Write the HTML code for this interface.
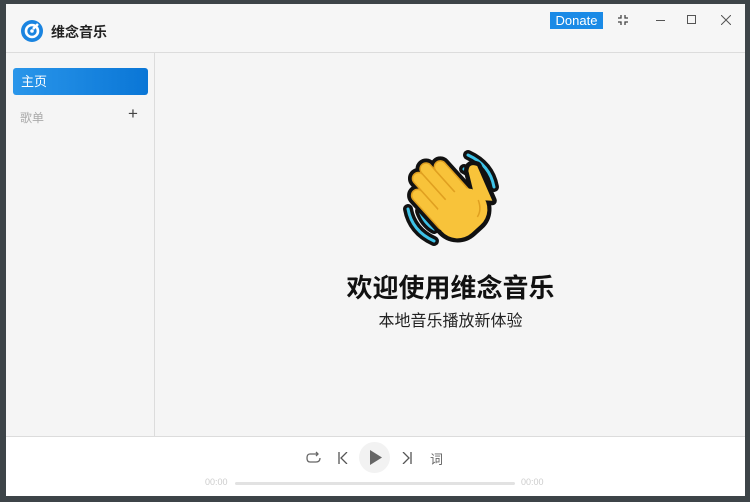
<!DOCTYPE html>
<html><head><meta charset="utf-8"><style>
*{margin:0;padding:0;box-sizing:border-box}
body{width:750px;height:502px;background:#3d4448;font-family:"Liberation Sans","Noto Sans CJK SC",sans-serif;position:relative;overflow:hidden}
.win{position:absolute;left:6px;top:4px;right:5px;bottom:6px;background:#f5f5f5}
.hdr{position:absolute;left:0;top:0;right:0;height:49px;border-bottom:1px solid #dcdcdc;background:#f6f6f6}
.side{position:absolute;left:0;top:49px;width:149px;height:383px;border-right:1px solid #dcdcdc;background:#f5f5f5}
.bot{position:absolute;left:0;top:432px;right:0;bottom:0;background:#fff;border-top:1px solid #dcdcdc}
</style></head><body>
<div class="win">
<div class="hdr">
 <svg style="position:absolute;left:15px;top:16px" width="22" height="22" viewBox="0 0 22 22"><circle cx="11" cy="11" r="11" fill="#1a84e0"/><circle cx="11" cy="11" r="6" fill="none" stroke="#fff" stroke-width="2.6"/><circle cx="11" cy="11" r="1.8" fill="#fff"/><path d="M12 9 L17 4" stroke="#fff" stroke-width="2.6"/></svg>
 <div style="position:absolute;left:45px;top:18px;font-size:14px;font-weight:bold;color:#222">维念音乐</div>
 <div style="position:absolute;left:544px;top:8px;width:53px;height:17px;background:#1a8ae6;color:#fff;font-size:13px;line-height:17px;text-align:center">Donate</div>
 <svg style="position:absolute;left:611px;top:10px" width="12" height="12" viewBox="0 0 12 12" fill="none" stroke="#444" stroke-width="1.3"><path d="M1 4H4V1M8 1V4H11M1 8H4V11M8 11V8H11"/></svg>
 <div style="position:absolute;left:650px;top:16px;width:9px;height:1px;background:#555"></div>
 <div style="position:absolute;left:681px;top:11px;width:9px;height:9px;border:1px solid #555"></div>
 <svg style="position:absolute;left:715px;top:11px" width="10" height="10" viewBox="0 0 10 10" stroke="#555" stroke-width="1"><path d="M0 0L10 10M10 0L0 10"/></svg>
</div>
<div class="side">
 <div style="position:absolute;left:7px;top:15px;width:135px;height:27px;border-radius:3px;background:linear-gradient(90deg,#2a96ea,#0a76d6);color:#fff;font-size:13px;line-height:27px;padding-left:8px">主页</div>
 <div style="position:absolute;left:14px;top:56px;font-size:12px;color:#aaa">歌单</div>
 <div style="position:absolute;left:122px;top:51px;font-size:17px;color:#444">+</div>
</div>
<svg style="position:absolute;left:394px;top:141px" width="102" height="104" viewBox="0 0 102 104">
 <g stroke-linecap="round" fill="none">
 <path d="M68 10 Q90 20 94 42" stroke="#111" stroke-width="10"/><path d="M68 10 Q90 20 94 42" stroke="#3ec3e8" stroke-width="3"/>
 <path d="M64 24 Q76 30 80 42" stroke="#111" stroke-width="10"/><path d="M64 24 Q76 30 80 42" stroke="#3ec3e8" stroke-width="3"/>
 <path d="M8 64 Q12 86 34 96" stroke="#111" stroke-width="10"/><path d="M8 64 Q12 86 34 96" stroke="#3ec3e8" stroke-width="3"/>
 <path d="M20 66 Q24 78 34 84" stroke="#111" stroke-width="10"/><path d="M20 66 Q24 78 34 84" stroke="#3ec3e8" stroke-width="3"/>
 </g>
 <g transform="rotate(-42 54 58)">
  <g stroke="#111" stroke-width="9" stroke-linejoin="round" fill="#111">
   <rect x="26" y="22" width="12" height="50" rx="6"/>
   <rect x="38" y="10" width="12" height="60" rx="6"/>
   <rect x="50" y="8" width="12" height="60" rx="6"/>
   <rect x="62" y="16" width="12" height="56" rx="6"/>
   <rect x="26" y="46" width="54" height="46" rx="22"/>
   <path d="M72 70 L86 44 Q92 38 96 46 L84 82 Z"/>
  </g>
  <g fill="#f8c33a" stroke="#e0a020" stroke-width="1.5">
   <rect x="26" y="22" width="12" height="50" rx="6"/>
   <rect x="38" y="10" width="12" height="60" rx="6"/>
   <rect x="50" y="8" width="12" height="60" rx="6"/>
   <rect x="62" y="16" width="12" height="56" rx="6"/>
  </g>
  <g fill="#f8c33a">
   <rect x="26" y="50" width="54" height="42" rx="21"/>
   <path d="M72 70 L86 44 Q92 38 96 46 L84 82 Z"/>
  </g>
  <path d="M74 72 Q70 82 62 84" stroke="#e0a020" stroke-width="1.5" fill="none"/>
 </g>
</svg>
<div style="position:absolute;left:0;right:0;top:264px;padding-left:150px;text-align:center;font-size:26px;font-weight:bold;color:#111;letter-spacing:0px">欢迎使用维念音乐</div>
<div style="position:absolute;left:0;right:0;top:303px;padding-left:150px;text-align:center;font-size:16px;color:#222">本地音乐播放新体验</div>
<div class="bot">
 <svg style="position:absolute;left:300px;top:14px" width="15" height="14" viewBox="0 0 15 14" fill="none" stroke="#666" stroke-width="1.3"><path d="M12 3H4Q1 3 1 7Q1 11 4 11H10Q14 11 14 7"/><path d="M10 1L12 3L10 5"/></svg>
 <svg style="position:absolute;left:332px;top:15px" width="10" height="12" viewBox="0 0 10 12" fill="none" stroke="#555" stroke-width="1.3"><path d="M1 0V12M9 0L3 6L9 12"/></svg>
 <div style="position:absolute;left:353px;top:5px;width:31px;height:31px;border-radius:50%;background:#f2f2f2"></div>
 <svg style="position:absolute;left:364px;top:13px" width="12" height="15" viewBox="0 0 12 15"><path d="M0 0L12 7.5L0 15Z" fill="#666"/></svg>
 <svg style="position:absolute;left:396px;top:15px" width="10" height="12" viewBox="0 0 10 12" fill="none" stroke="#555" stroke-width="1.3"><path d="M9 0V12M1 0L7 6L1 12"/></svg>
 <div style="position:absolute;left:424px;top:12px;font-size:13px;color:#666">词</div>
 <div style="position:absolute;left:199px;top:40px;font-size:9px;color:#ccc">00:00</div>
 <div style="position:absolute;left:229px;top:45px;width:280px;height:3px;border-radius:2px;background:#e2e2e2"></div>
 <div style="position:absolute;left:515px;top:40px;font-size:9px;color:#ccc">00:00</div>
</div>
</div>
</body></html>
